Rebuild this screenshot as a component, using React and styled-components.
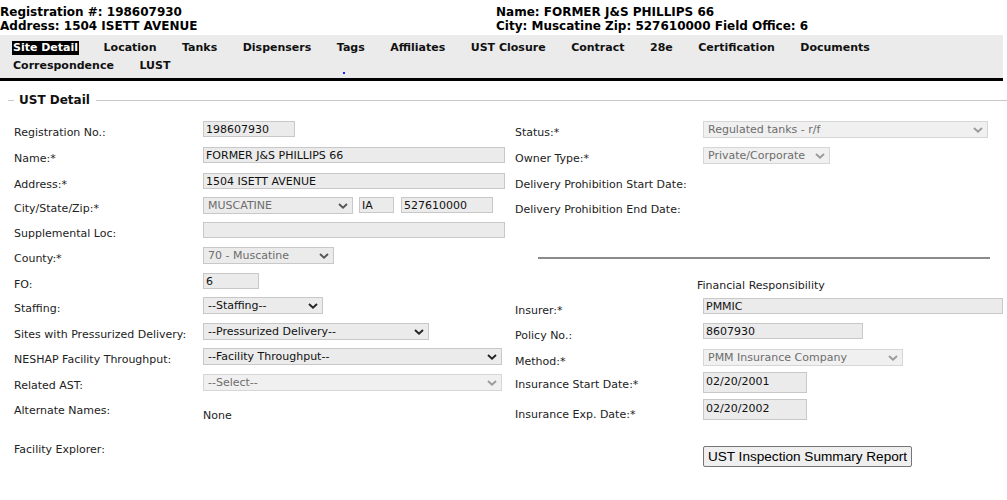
import React from 'react';
import styled, {createGlobalStyle, css} from 'styled-components';

const GlobalStyle = createGlobalStyle`
    body {
        margin: 0;
        background: #fff;
        color: #222;
        font-family: "DejaVu Sans", Verdana, sans-serif;
        font-size: 11px;
        overflow: hidden;
    }
`;

const Header = styled.header`
    display: grid;
    grid-template-columns: 496px 1fr;
    padding-top: 5px;
    font-size: 12px;
    font-weight: bold;
    line-height: 14px;
    color: #000;
    white-space: nowrap;
`;

const Nav = styled.nav`
    position: relative;
    width: 1003px;
    box-sizing: border-box;
    margin-top: 2px;
    padding: 6px 0 5px 12px;
    background: #ebebeb;
    border-bottom: 3px solid #000;
    display: flex;
    flex-direction: column;
    gap: 4px;
`;

const NavRow = styled.div`
    display: flex;
    gap: 23.5px;
`;

const NavItem = styled.a`
    font-size: 11px;
    font-weight: bold;
    line-height: 14px;
    color: #111;
    text-decoration: none;
    padding: 0 1px;
    ${props => props.$active && css`
        background: #000;
        color: #fff;
    `}
`;

const Dot = styled.span`
    position: absolute;
    left: 343px;
    top: 37px;
    width: 2px;
    height: 2px;
    background: #2020ff;
`;

const SectionTitle = styled.div`
    display: flex;
    align-items: center;
    margin: 12px 0 0 8px;
    font-size: 12px;
    font-weight: bold;
    line-height: 14px;
    color: #111;
    &::before, &::after {
        content: '';
        height: 1px;
        background: #c8c8c8;
    }
    &::before {
        width: 6px;
        margin-right: 5px;
    }
    &::after {
        flex: 1;
        margin-left: 6px;
    }
`;

const Form = styled.div`
    display: grid;
    grid-template-columns: 501px 1fr;
    padding: 12px 0 0 14px;
`;

const Column = styled.div`
    display: flex;
    flex-direction: column;
`;

const Row = styled.div`
    display: grid;
    grid-template-columns: ${props => props.$label || 189}px 1fr;
    align-items: start;
    height: ${props => props.$h || 25}px;
`;

const Label = styled.div`
    padding-top: ${props => props.$pt ?? 7}px;
    line-height: 14px;
    color: #222;
    white-space: nowrap;
`;

const Fields = styled.div`
    display: flex;
    gap: ${props => props.$gap || 6}px;
    padding-top: 2px;
`;

const Input = styled.input`
    box-sizing: border-box;
    width: ${props => props.$w}px;
    height: ${props => props.$tall ? 21 : 16}px;
    margin: 0;
    padding: 0 2px;
    border: 1px solid #c8c8c8;
    background: #ebebeb;
    color: #111;
    font-family: "DejaVu Sans", Verdana, sans-serif;
    font-size: 11px;
    outline: none;
    ${props => props.$tall && css`
        padding-bottom: 3px;
    `}
`;

const SelectWrap = styled.div`
    position: relative;
    width: ${props => props.$w}px;
    height: 17px;
`;

const Select = styled.select`
    appearance: none;
    box-sizing: border-box;
    width: 100%;
    height: 17px;
    margin: 0;
    padding: 0 18px 0 4px;
    border: 1px solid ${props => props.$faded ? '#d6d6d6' : '#c8c8c8'};
    border-radius: 0;
    background: ${props => props.$faded ? '#f0f0f0' : '#ebebeb'};
    color: ${props => props.disabled ? '#6d6d6d' : '#111'};
    font-family: "DejaVu Sans", Verdana, sans-serif;
    font-size: 11px;
    opacity: 1;
`;

const Chevron = styled.svg`
    position: absolute;
    right: 5px;
    top: 6px;
    pointer-events: none;
`;

const Plain = styled.div`
    padding-top: ${props => props.$pt || 0}px;
    line-height: 14px;
    color: #222;
`;

const Rule = styled.hr`
    margin: 36px 17px 0 23px;
    border: none;
    height: 2px;
    background: #8a8a8a;
`;

const SubHeading = styled.div`
    margin: 20px 0 3px 182px;
    line-height: 14px;
    color: #222;
`;

const ReportButton = styled.button`
    box-sizing: border-box;
    width: 209px;
    height: 21px;
    margin: 0;
    padding: 0;
    border: 1px solid #767676;
    border-radius: 2px;
    background: #efefef;
    color: #000;
    font-family: "Liberation Sans", Arial, sans-serif;
    font-size: 13.6px;
    line-height: 19px;
    white-space: nowrap;
`;

const Drop = ({w, value, disabled, faded}) => (
    <SelectWrap $w={w}>
        <Select disabled={disabled} $faded={faded} defaultValue={value}>
            <option>{value}</option>
        </Select>
        <Chevron width="10" height="6" viewBox="0 0 10 6">
            <path d="M1 1 L5 4.6 L9 1" fill="none"
                stroke={faded ? '#9a9a9a' : disabled ? '#555' : '#222'}
                strokeWidth="1.9" />
        </Chevron>
    </SelectWrap>
);

const Req = ({children}) => <>{children}:*</>;

const tabsTop = ['Location', 'Tanks', 'Dispensers', 'Tags', 'Affiliates', 'UST Closure', 'Contract', '28e', 'Certification', 'Documents'];

const App = () => {
    return (
        <>
            <GlobalStyle />
            <Header>
                <div>
                    <div>Registration #: 198607930</div>
                    <div>Address: 1504 ISETT AVENUE</div>
                </div>
                <div>
                    <div>Name: FORMER J&amp;S PHILLIPS 66</div>
                    <div>City: Muscatine Zip: 527610000 Field Office: 6</div>
                </div>
            </Header>

            <Nav>
                <NavRow>
                    <NavItem $active href="#">Site Detail</NavItem>
                    {tabsTop.map(t => <NavItem key={t} href="#">{t}</NavItem>)}
                </NavRow>
                <NavRow>
                    <NavItem href="#">Correspondence</NavItem>
                    <NavItem href="#">LUST</NavItem>
                </NavRow>
                <Dot />
            </Nav>

            <SectionTitle>UST Detail</SectionTitle>

            <Form>
                <Column>
                    <Row $h={26}>
                        <Label>Registration No.:</Label>
                        <Fields><Input $w={92} defaultValue="198607930" /></Fields>
                    </Row>
                    <Row $h={26}>
                        <Label><Req>Name</Req></Label>
                        <Fields><Input $w={302} defaultValue="FORMER J&S PHILLIPS 66" /></Fields>
                    </Row>
                    <Row $h={24}>
                        <Label><Req>Address</Req></Label>
                        <Fields><Input $w={302} defaultValue="1504 ISETT AVENUE" /></Fields>
                    </Row>
                    <Row $h={25}>
                        <Label><Req>City/State/Zip</Req></Label>
                        <Fields>
                            <Drop w={150} value="MUSCATINE" disabled />
                            <Input $w={35} defaultValue="IA" />
                            <Input $w={92} defaultValue="527610000" style={{marginLeft: 1}} />
                        </Fields>
                    </Row>
                    <Row $h={25}>
                        <Label>Supplemental Loc:</Label>
                        <Fields><Input $w={302} defaultValue="" /></Fields>
                    </Row>
                    <Row $h={26}>
                        <Label><Req>County</Req></Label>
                        <Fields><Drop w={131} value="70 - Muscatine" disabled /></Fields>
                    </Row>
                    <Row $h={24}>
                        <Label>FO:</Label>
                        <Fields><Input $w={56} defaultValue="6" /></Fields>
                    </Row>
                    <Row $h={26}>
                        <Label>Staffing:</Label>
                        <Fields><Drop w={120} value="--Staffing--" /></Fields>
                    </Row>
                    <Row $h={25}>
                        <Label>Sites with Pressurized Delivery:</Label>
                        <Fields><Drop w={226} value="--Pressurized Delivery--" /></Fields>
                    </Row>
                    <Row $h={26}>
                        <Label>NESHAP Facility Throughput:</Label>
                        <Fields><Drop w={299} value="--Facility Throughput--" /></Fields>
                    </Row>
                    <Row $h={25}>
                        <Label>Related AST:</Label>
                        <Fields><Drop w={299} value="--Select--" disabled faded /></Fields>
                    </Row>
                    <Row $h={39}>
                        <Label>Alternate Names:</Label>
                        <Plain $pt={12}>None</Plain>
                    </Row>
                    <Row $h={25}>
                        <Label>Facility Explorer:</Label>
                    </Row>
                </Column>

                <Column>
                    <Row $label={188} $h={26}>
                        <Label><Req>Status</Req></Label>
                        <Fields><Drop w={285} value="Regulated tanks - r/f" disabled faded /></Fields>
                    </Row>
                    <Row $label={188} $h={26}>
                        <Label><Req>Owner Type</Req></Label>
                        <Fields><Drop w={127} value="Private/Corporate" disabled faded /></Fields>
                    </Row>
                    <Row $label={188} $h={25}>
                        <Label>Delivery Prohibition Start Date:</Label>
                    </Row>
                    <Row $label={188} $h={25}>
                        <Label>Delivery Prohibition End Date:</Label>
                    </Row>

                    <Rule />
                    <SubHeading>Financial Responsibility</SubHeading>

                    <Row $label={188} $h={25}>
                        <Label $pt={8}><Req>Insurer</Req></Label>
                        <Fields><Input $w={300} defaultValue="PMMIC" /></Fields>
                    </Row>
                    <Row $label={188} $h={26}>
                        <Label $pt={8}>Policy No.:</Label>
                        <Fields><Input $w={160} defaultValue="8607930" /></Fields>
                    </Row>
                    <Row $label={188} $h={23}>
                        <Label $pt={8}><Req>Method</Req></Label>
                        <Fields><Drop w={200} value="PMM Insurance Company" disabled faded /></Fields>
                    </Row>
                    <Row $label={188} $h={27}>
                        <Label $pt={8}><Req>Insurance Start Date</Req></Label>
                        <Fields><Input $tall $w={104} defaultValue="02/20/2001" /></Fields>
                    </Row>
                    <Row $label={188} $h={47}>
                        <Label $pt={11}><Req>Insurance Exp. Date</Req></Label>
                        <Fields><Input $tall $w={104} defaultValue="02/20/2002" /></Fields>
                    </Row>
                    <Row $label={188} $h={25}>
                        <div />
                        <Fields><ReportButton type="button">UST Inspection Summary Report</ReportButton></Fields>
                    </Row>
                </Column>
            </Form>
        </>
    );
};

export default App;
